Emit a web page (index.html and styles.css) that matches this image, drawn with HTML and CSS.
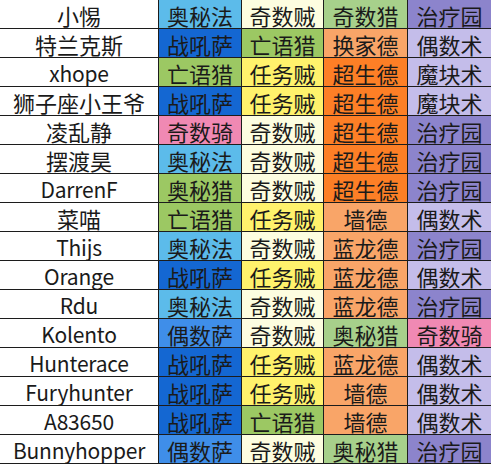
FILE: index.html
```html
<!DOCTYPE html>
<html>
<head>
<meta charset="utf-8">
<link rel="stylesheet" href="styles.css">
</head>
<body>
<div class="grid">
  <div class="c name">小惕</div><div class="c arc">奥秘法</div><div class="c odd">奇数贼</div><div class="c grn2">奇数猎</div><div class="c heal">治疗园</div>
  <div class="c name">特兰克斯</div><div class="c shm">战吼萨</div><div class="c grn">亡语猎</div><div class="c ldr">换家德</div><div class="c lock">偶数术</div>
  <div class="c name lat">xhope</div><div class="c grn">亡语猎</div><div class="c quest">任务贼</div><div class="c spit">超生德</div><div class="c lock">魔块术</div>
  <div class="c name">狮子座小王爷</div><div class="c shm">战吼萨</div><div class="c quest">任务贼</div><div class="c spit">超生德</div><div class="c lock">魔块术</div>
  <div class="c name">凌乱静</div><div class="c pal">奇数骑</div><div class="c odd">奇数贼</div><div class="c spit">超生德</div><div class="c heal">治疗园</div>
  <div class="c name">摆渡昊</div><div class="c arc">奥秘法</div><div class="c odd">奇数贼</div><div class="c spit">超生德</div><div class="c heal">治疗园</div>
  <div class="c name lat">DarrenF</div><div class="c grn">奥秘猎</div><div class="c odd">奇数贼</div><div class="c spit">超生德</div><div class="c heal">治疗园</div>
  <div class="c name">菜喵</div><div class="c grn">亡语猎</div><div class="c quest">任务贼</div><div class="c ldr">墙德</div><div class="c lock">偶数术</div>
  <div class="c name lat">Thijs</div><div class="c arc">奥秘法</div><div class="c odd">奇数贼</div><div class="c ldr">蓝龙德</div><div class="c heal">治疗园</div>
  <div class="c name lat">Orange</div><div class="c shm">战吼萨</div><div class="c quest">任务贼</div><div class="c ldr">蓝龙德</div><div class="c lock">偶数术</div>
  <div class="c name lat">Rdu</div><div class="c arc">奥秘法</div><div class="c odd">奇数贼</div><div class="c ldr">蓝龙德</div><div class="c heal">治疗园</div>
  <div class="c name lat">Kolento</div><div class="c even">偶数萨</div><div class="c odd">奇数贼</div><div class="c grn2">奥秘猎</div><div class="c pal">奇数骑</div>
  <div class="c name lat">Hunterace</div><div class="c shm">战吼萨</div><div class="c quest">任务贼</div><div class="c ldr">蓝龙德</div><div class="c lock">偶数术</div>
  <div class="c name lat">Furyhunter</div><div class="c shm">战吼萨</div><div class="c quest">任务贼</div><div class="c ldr">墙德</div><div class="c lock">偶数术</div>
  <div class="c name lat">A83650</div><div class="c shm">战吼萨</div><div class="c grn">亡语猎</div><div class="c ldr">墙德</div><div class="c lock">偶数术</div>
  <div class="c name lat">Bunnyhopper</div><div class="c even">偶数萨</div><div class="c odd">奇数贼</div><div class="c grn2">奥秘猎</div><div class="c heal">治疗园</div>
</div>
</body>
</html>
```

FILE: styles.css
```css
html, body {
  margin: 0;
  padding: 0;
  background: #ffffff;
}
.grid {
  display: grid;
  width: 491px;
  grid-template-columns: 158px 82px 81px 83px 83px;
  grid-auto-rows: 28px;
  column-gap: 1px;
  row-gap: 1px;
  padding-bottom: 1px;
  background: #1c1c1c;
}
.c {
  display: flex;
  align-items: center;
  justify-content: center;
  font-family: "Noto Sans CJK SC", "Noto Sans", sans-serif;
  font-size: 22px;
  line-height: 25px;
  padding-top: 2px;
  box-sizing: border-box;
  color: #1a1a1a;
  white-space: nowrap;
}
.lat {
  font-size: 21px;
  letter-spacing: -0.2px;
}
.name { background: #ffffff; }
.arc { background: #5cbbea; }
.shm { background: #1467d2; }
.even { background: #3f8ee9; }
.grn { background: #9cc863; }
.pal { background: #f089b3; }
.odd { background: #fdfde0; }
.quest { background: #fff26c; }
.grn2 { background: #a7d08b; }
.ldr { background: #f9a568; }
.spit { background: #fd7f26; }
.heal { background: #8c84cc; }
.lock { background: #c4bdea; }
```
